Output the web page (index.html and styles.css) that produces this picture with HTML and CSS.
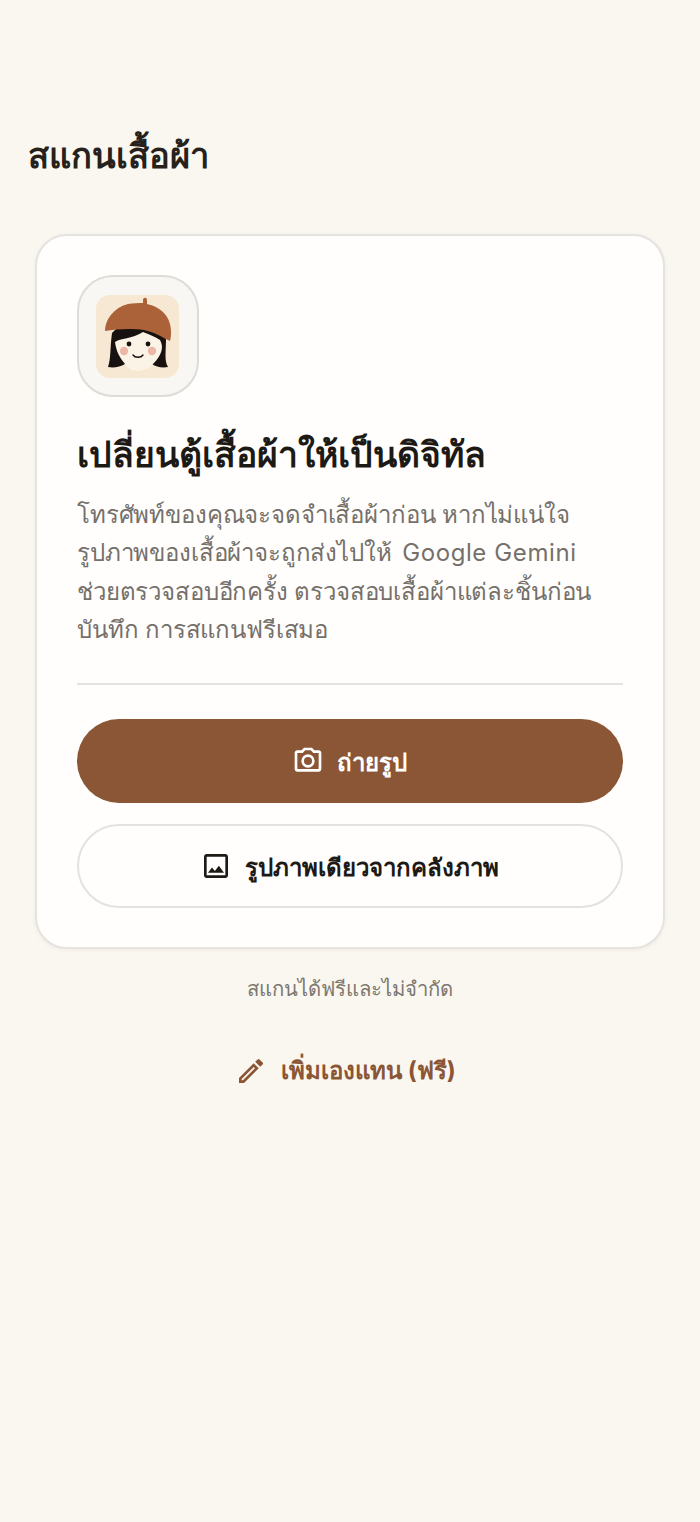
FILE: index.html
```html
<!DOCTYPE html>
<html lang="th">
<head>
<meta charset="utf-8">
<title>สแกนเสื้อผ้า</title>
<link rel="stylesheet" href="styles.css">
</head>
<body>
<main class="screen">
  <h1 class="page-title">สแกนเสื้อผ้า</h1>
  <section class="card">
    <div class="avatar-tile">
      <svg class="avatar" viewBox="0 0 83 83" aria-hidden="true">
        <rect width="83" height="83" rx="14" fill="#f6e8d3"/>
        <path d="M12 72C15 64 14 52 16 38L24 30H60L70 44C70 56 68 66 72 72C66 73 60 72 56 69H29C24 72 18 73 12 72Z" fill="#17120f"/>
        <path d="M19 47C24 43 36 44 47 37C54 40 60 42 64 45C68 52 66 60 57 69C53 74 47 76 41 76C35 76 32 73 29 69C23 62 20 55 19 47Z" fill="#fbf3e5"/>
        <path d="M9 36C9 25 17 13 32 9C37 8 42 8 47 8V5C47 2 51 2 51 5V9C66 12 75 23 75 36C75 39 75 42 74 46C66 42 58 37 48 35C36 33 20 34 9 36Z" fill="#ab6238"/>
        <circle cx="33" cy="49" r="2.400" fill="#17120f"/>
        <circle cx="52" cy="49" r="2.400" fill="#17120f"/>
        <circle cx="28" cy="56" r="4.200" fill="#ecb7a6"/>
        <circle cx="56" cy="56" r="4.200" fill="#ecb7a6"/>
        <path d="M37 60C39 63 45 63 47 60" fill="none" stroke="#17120f" stroke-width="1.400" stroke-linecap="round"/>
      </svg>
    </div>
    <h2 class="card-title">เปลี่ยนตู้เสื้อผ้าให้เป็นดิจิทัล</h2>
    <p class="card-text">โทรศัพท์ของคุณจะจดจำเสื้อผ้าก่อน หากไม่แน่ใจ<br>รูปภาพของเสื้อผ้าจะถูกส่งไปให้ <span class="latin">Google Gemini</span><br>ช่วยตรวจสอบอีกครั้ง ตรวจสอบเสื้อผ้าแต่ละชิ้นก่อน<br>บันทึก การสแกนฟรีเสมอ</p>
    <hr class="divider">
    <div class="actions">
      <button class="btn btn-primary" type="button">
        <svg class="icon" viewBox="0 0 24 24" aria-hidden="true"><path d="M20 4h-3.170L15 2H9L7.170 4H4c-1.100 0-2 .900-2 2v12c0 1.100.900 2 2 2h16c1.100 0 2-.900 2-2V6c0-1.100-.900-2-2-2zm0 14H4V6h4.050l1.830-2h4.240l1.830 2H20v12zM12 7a5 5 0 1 0 0 10 5 5 0 0 0 0-10zm0 8a3 3 0 1 1 0-6 3 3 0 0 1 0 6z" fill="currentColor"/></svg>
        <span>ถ่ายรูป</span>
      </button>
      <button class="btn btn-outline" type="button">
        <svg class="icon" viewBox="0 0 24 24" aria-hidden="true"><path d="M19 5v14H5V5h14m0-2H5c-1.100 0-2 .900-2 2v14c0 1.100.900 2 2 2h14c1.100 0 2-.900 2-2V5c0-1.100-.900-2-2-2zm-4.860 8.860-3 3.870L9 13.140 6 17h12l-3.860-5.140z" fill="currentColor"/></svg>
        <span>รูปภาพเดียวจากคลังภาพ</span>
      </button>
    </div>
  </section>
  <p class="note">สแกนได้ฟรีและไม่จำกัด</p>
  <a class="manual" href="#">
    <svg class="icon" viewBox="0 0 24 24" aria-hidden="true"><path d="M3 17.250V21h3.750L17.810 9.940l-3.750-3.750L3 17.250zM5.920 19H5v-.920l9.060-9.060.920.920L5.920 19zM20.710 7.040a1 1 0 0 0 0-1.410l-2.340-2.340a1 1 0 0 0-1.410 0l-1.830 1.830 3.750 3.750 1.830-1.830z" fill="currentColor"/></svg>
    <span>เพิ่มเองแทน (ฟรี)</span>
  </a>
</main>
</body>
</html>
```
FILE: styles.css
```css
* { box-sizing: border-box; }
html, body { margin: 0; padding: 0; }
body {
  background: #faf7f0;
  color: #1f1b16;
  font-family: Inter, Roboto, sans-serif;
  min-height: 1522px;
}
.screen { display: flex; flex-direction: column; align-items: stretch; padding: 132px 35px 0; }
.page-title { margin: 0 0 54px -7px; font-size: 34.500px; line-height: 48px; font-weight: 700; color: #26221b; }
.card {
  background: #fffefc;
  border: 2px solid #e5e3df;
  border-radius: 32px;
  padding: 39px 40px 39px;
  display: flex;
  flex-direction: column;
  box-shadow: 0 1px 4px rgba(60, 50, 40, .06);
}
.avatar-tile {
  width: 122px; height: 122px;
  border: 2px solid #dfdcd8;
  border-radius: 36px;
  background: #f9f7f4;
  display: flex; align-items: center; justify-content: center;
  padding-right: 1px;
}
.avatar { width: 83px; height: 83px; display: block; }
.card-title { margin: 34px 0 0; font-size: 35.500px; line-height: 48px; font-weight: 700; color: #1d1a15; white-space: nowrap; }
.card-text { margin: 17px 0 0; font-size: 24px; line-height: 38.400px; color: #75706a; letter-spacing: -.15px; }
.latin { letter-spacing: .6px; margin-left: 4px; }
.divider { border: 0; height: 2px; background: #e3e2de; margin: 33px 0 34px; width: 100%; }
.actions { display: flex; flex-direction: column; gap: 21px; }
.btn {
  height: 84px; border-radius: 42px; font: inherit; font-size: 24px; font-weight: 700;
  display: flex; align-items: center; justify-content: center; gap: 13px; padding: 0 2px 0 0;
}
.btn span { padding-top: 3px; }
.btn-primary { background: #8b5636; color: #fff; border: 0; }
.btn-outline { background: #fffefc; color: #1d1a15; border: 2px solid #e3e2de; }
.icon { width: 32px; height: 32px; flex: none; }
.note { margin: 24px 0 0; text-align: center; font-size: 20.300px; line-height: 32px; color: #7d786f; }
.manual {
  margin-top: 48px; padding-right: 9px; display: flex; align-items: center; justify-content: center; gap: 14px;
  color: #8b5636; text-decoration: none; font-size: 24px; font-weight: 700; line-height: 36px;
}
```
